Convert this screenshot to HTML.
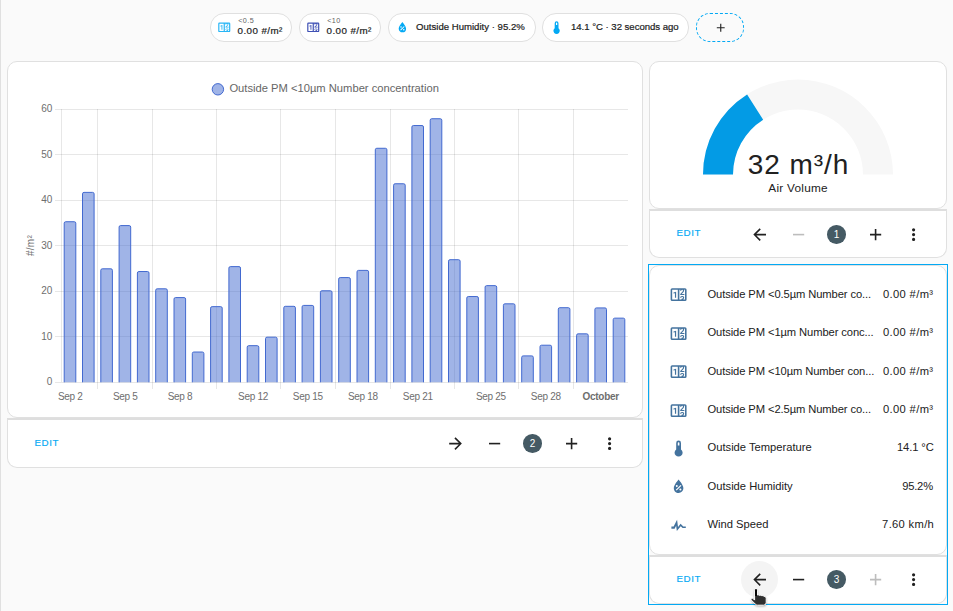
<!DOCTYPE html>
<html><head><meta charset="utf-8">
<style>
html,body{margin:0;padding:0}
body{width:953px;height:611px;overflow:hidden;background:#fafafa;position:relative;font-family:"Liberation Sans",sans-serif;color:#212121}
.abs{position:absolute}
.small{font-size:7.2px;letter-spacing:0.45px;color:#616161;line-height:9px}
.btxt{font-size:9.8px;line-height:12px;white-space:nowrap;-webkit-text-stroke:0.2px #212121}
.ic{position:absolute;display:block}
.badge{position:absolute;top:13px;height:27px;border:1px solid #e0e0e0;border-radius:14px;background:#fff;box-sizing:content-box}
.card{position:absolute;background:#fff;border:1px solid #e0e0e0;border-radius:10px;box-sizing:border-box}
.opts{position:absolute;background:#fff;border:1px solid #e0e0e0;border-top:2px solid #dedede;border-radius:0 0 10px 10px;box-sizing:border-box}
.edit{position:absolute;color:#03a9f4;font-size:9.8px;letter-spacing:0.55px;line-height:12px;-webkit-text-stroke:0.15px #03a9f4}
.num{position:absolute;width:18.6px;height:18.6px;border-radius:50%;background:#455a64;color:#fff;font-size:10px;line-height:20.4px;text-align:center}
.rname{position:absolute;left:707.5px;font-size:11.2px;line-height:14px;white-space:nowrap}
.rn2{letter-spacing:-0.1px}
.rval{position:absolute;right:20px;font-size:11.2px;line-height:14px;white-space:nowrap;text-align:right}
</style></head><body>
<div class="abs" style="left:0;top:0;width:1px;height:611px;background:#e0e0e0"></div>

<!-- badges -->
<div class="badge" style="left:210px;width:80px"></div>
<svg class="ic" style="left:216.8px;top:19.8px;width:14.5px;height:14.5px" viewBox="0 0 24 24"><path fill="#29b6f6" d="M4,4H20A2,2 0 0,1 22,6V18A2,2 0 0,1 20,20H4A2,2 0 0,1 2,18V6A2,2 0 0,1 4,4M4,6V18H11V6H4M20,18V6H18.76C19,6.54 18.95,7.07 18.95,7.13C18.88,7.8 18.41,8.5 18.24,8.75L15.91,11.3L19.23,11.28L19.24,12.5L14.04,12.47L14,11.47C14,11.47 17.05,8.24 17.2,7.95C17.34,7.67 17.91,6 16.5,6C15.27,6.05 15.41,7.3 15.41,7.3L13.87,7.31C13.87,7.31 13.88,6.65 14.25,6H13V18H15.58L15.57,17.14L16.54,17.13C16.54,17.13 17.45,16.97 17.46,16.08C17.5,15.08 16.65,15.08 16.5,15.08C16.37,15.08 15.43,15.13 15.43,15.95H13.91C13.91,15.95 13.95,13.89 16.5,13.89C19.1,13.89 18.96,15.91 18.96,15.91C18.96,15.91 19,17.16 17.85,17.63L18.37,18H20M8.92,16H7.42V10.2L5.62,10.76V9.53L8.76,8.41H8.92V16Z"/></svg>
<div class="abs small" style="left:238.2px;top:16px">&lt;0.5</div>
<div class="abs btxt" style="left:237.6px;top:25px;letter-spacing:0.42px">0.00 #/m²</div>

<div class="badge" style="left:299px;width:80px"></div>
<svg class="ic" style="left:305.8px;top:19.8px;width:14.5px;height:14.5px" viewBox="0 0 24 24"><path fill="#3f51b5" d="M4,4H20A2,2 0 0,1 22,6V18A2,2 0 0,1 20,20H4A2,2 0 0,1 2,18V6A2,2 0 0,1 4,4M4,6V18H11V6H4M20,18V6H18.76C19,6.54 18.95,7.07 18.95,7.13C18.88,7.8 18.41,8.5 18.24,8.75L15.91,11.3L19.23,11.28L19.24,12.5L14.04,12.47L14,11.47C14,11.47 17.05,8.24 17.2,7.95C17.34,7.67 17.91,6 16.5,6C15.27,6.05 15.41,7.3 15.41,7.3L13.87,7.31C13.87,7.31 13.88,6.65 14.25,6H13V18H15.58L15.57,17.14L16.54,17.13C16.54,17.13 17.45,16.97 17.46,16.08C17.5,15.08 16.65,15.08 16.5,15.08C16.37,15.08 15.43,15.13 15.43,15.95H13.91C13.91,15.95 13.95,13.89 16.5,13.89C19.1,13.89 18.96,15.91 18.96,15.91C18.96,15.91 19,17.16 17.85,17.63L18.37,18H20M8.92,16H7.42V10.2L5.62,10.76V9.53L8.76,8.41H8.92V16Z"/></svg>
<div class="abs small" style="left:327.2px;top:16px">&lt;10</div>
<div class="abs btxt" style="left:326.6px;top:25px;letter-spacing:0.42px">0.00 #/m²</div>

<div class="badge" style="left:388px;width:146px"></div>
<svg class="ic" style="left:394.9px;top:20.1px;width:14.8px;height:14.8px" viewBox="0 0 24 24"><path fill="#03a9f4" d="M12,3.25C12,3.25 6,10 6,14C6,17.32 8.69,20 12,20A6,6 0 0,0 18,14C18,10 12,3.25 12,3.25M14.47,9.97L15.53,11.03L9.53,17.03L8.47,15.97M9.75,10A1.25,1.25 0 0,1 11,11.25A1.25,1.25 0 0,1 9.75,12.5A1.25,1.25 0 0,1 8.5,11.25A1.25,1.25 0 0,1 9.75,10M14.25,14.5A1.25,1.25 0 0,1 15.5,15.75A1.25,1.25 0 0,1 14.25,17A1.25,1.25 0 0,1 13,15.75A1.25,1.25 0 0,1 14.25,14.5Z"/></svg>
<div class="abs btxt" style="left:416px;top:20.9px;font-size:9.6px;letter-spacing:0px">Outside Humidity · 95.2%</div>

<div class="badge" style="left:542px;width:145px"></div>
<svg class="ic" style="left:548.7px;top:19.6px;width:15.2px;height:15.2px" viewBox="0 0 24 24"><path fill="#03a9f4" d="M15,13V5A3,3 0 0,0 9,5V13A5,5 0 1,0 15,13M12,4A1,1 0 0,1 13,5V8H11V5A1,1 0 0,1 12,4Z"/></svg>
<div class="abs btxt" style="left:571px;top:20.9px;font-size:9.6px;letter-spacing:-0.03px">14.1 °C · 32 seconds ago</div>

<div class="abs" style="left:696px;top:13px;width:46px;height:27px;border:1px dashed #03a9f4;border-radius:14px"></div>
<svg class="ic" style="left:713.5px;top:21px;width:13.5px;height:13.5px" viewBox="0 0 24 24"><path fill="#212121" d="M19,13H13V19H11V13H5V11H11V5H13V11H19V13Z"/></svg>

<!-- chart card -->
<div class="card" style="left:7px;top:61px;width:636px;height:357px"></div>
<div class="opts" style="left:7px;top:418px;width:636px;height:50px"></div>
<svg class="chart" width="953" height="611" viewBox="0 0 953 611" style="position:absolute;left:0;top:0">
<g stroke="rgba(0,0,0,0.095)" stroke-width="1" shape-rendering="crispEdges"><line x1="54.5" x2="628" y1="382.30" y2="382.30"/><line x1="54.5" x2="628" y1="336.82" y2="336.82"/><line x1="54.5" x2="628" y1="291.34" y2="291.34"/><line x1="54.5" x2="628" y1="245.86" y2="245.86"/><line x1="54.5" x2="628" y1="200.38" y2="200.38"/><line x1="54.5" x2="628" y1="154.90" y2="154.90"/><line x1="54.5" x2="628" y1="109.42" y2="109.42"/><line x1="61.5" x2="61.5" y1="109.4" y2="382.3"/><line x1="97.7" x2="97.7" y1="109.4" y2="388.5"/><line x1="152.6" x2="152.6" y1="109.4" y2="388.5"/><line x1="216.6" x2="216.6" y1="109.4" y2="388.5"/><line x1="280.6" x2="280.6" y1="109.4" y2="388.5"/><line x1="335.4" x2="335.4" y1="109.4" y2="388.5"/><line x1="390.3" x2="390.3" y1="109.4" y2="388.5"/><line x1="454.3" x2="454.3" y1="109.4" y2="388.5"/><line x1="518.3" x2="518.3" y1="109.4" y2="388.5"/><line x1="573.2" x2="573.2" y1="109.4" y2="388.5"/></g>
<g fill="rgba(66,105,208,0.5)" stroke="#4269d0" stroke-width="1"><path d="M64.20,382.30 V223.23 Q64.20,221.73 65.70,221.73 H74.30 Q75.80,221.73 75.80,223.23 V382.30" /><path d="M82.50,382.30 V193.89 Q82.50,192.39 84.00,192.39 H92.60 Q94.10,192.39 94.10,193.89 V382.30" /><path d="M100.80,382.30 V270.30 Q100.80,268.80 102.30,268.80 H110.90 Q112.40,268.80 112.40,270.30 V382.30" /><path d="M119.10,382.30 V227.09 Q119.10,225.59 120.60,225.59 H129.20 Q130.70,225.59 130.70,227.09 V382.30" /><path d="M137.40,382.30 V273.03 Q137.40,271.53 138.90,271.53 H147.50 Q149.00,271.53 149.00,273.03 V382.30" /><path d="M155.70,382.30 V290.31 Q155.70,288.81 157.20,288.81 H165.80 Q167.30,288.81 167.30,290.31 V382.30" /><path d="M174.00,382.30 V299.09 Q174.00,297.59 175.50,297.59 H184.10 Q185.60,297.59 185.60,299.09 V382.30" /><path d="M192.30,382.30 V353.53 Q192.30,352.03 193.80,352.03 H202.40 Q203.90,352.03 203.90,353.53 V382.30" /><path d="M210.60,382.30 V308.14 Q210.60,306.64 212.10,306.64 H220.70 Q222.20,306.64 222.20,308.14 V382.30" /><path d="M228.90,382.30 V268.12 Q228.90,266.62 230.40,266.62 H239.00 Q240.50,266.62 240.50,268.12 V382.30" /><path d="M247.20,382.30 V347.16 Q247.20,345.66 248.70,345.66 H257.30 Q258.80,345.66 258.80,347.16 V382.30" /><path d="M265.50,382.30 V338.66 Q265.50,337.16 267.00,337.16 H275.60 Q277.10,337.16 277.10,338.66 V382.30" /><path d="M283.80,382.30 V307.82 Q283.80,306.32 285.30,306.32 H293.90 Q295.40,306.32 295.40,307.82 V382.30" /><path d="M302.10,382.30 V306.91 Q302.10,305.41 303.60,305.41 H312.20 Q313.70,305.41 313.70,306.91 V382.30" /><path d="M320.40,382.30 V292.27 Q320.40,290.77 321.90,290.77 H330.50 Q332.00,290.77 332.00,292.27 V382.30" /><path d="M338.70,382.30 V279.08 Q338.70,277.58 340.20,277.58 H348.80 Q350.30,277.58 350.30,279.08 V382.30" /><path d="M357.00,382.30 V271.89 Q357.00,270.39 358.50,270.39 H367.10 Q368.60,270.39 368.60,271.89 V382.30" /><path d="M375.30,382.30 V149.78 Q375.30,148.28 376.80,148.28 H385.40 Q386.90,148.28 386.90,149.78 V382.30" /><path d="M393.60,382.30 V185.25 Q393.60,183.75 395.10,183.75 H403.70 Q405.20,183.75 405.20,185.25 V382.30" /><path d="M411.90,382.30 V127.04 Q411.90,125.54 413.40,125.54 H422.00 Q423.50,125.54 423.50,127.04 V382.30" /><path d="M430.20,382.30 V120.22 Q430.20,118.72 431.70,118.72 H440.30 Q441.80,118.72 441.80,120.22 V382.30" /><path d="M448.50,382.30 V261.20 Q448.50,259.70 450.00,259.70 H458.60 Q460.10,259.70 460.10,261.20 V382.30" /><path d="M466.80,382.30 V298.04 Q466.80,296.54 468.30,296.54 H476.90 Q478.40,296.54 478.40,298.04 V382.30" /><path d="M485.10,382.30 V287.13 Q485.10,285.63 486.60,285.63 H495.20 Q496.70,285.63 496.70,287.13 V382.30" /><path d="M503.40,382.30 V305.32 Q503.40,303.82 504.90,303.82 H513.50 Q515.00,303.82 515.00,305.32 V382.30" /><path d="M521.70,382.30 V357.39 Q521.70,355.89 523.20,355.89 H531.80 Q533.30,355.89 533.30,357.39 V382.30" /><path d="M540.00,382.30 V346.71 Q540.00,345.21 541.50,345.21 H550.10 Q551.60,345.21 551.60,346.71 V382.30" /><path d="M558.30,382.30 V309.19 Q558.30,307.69 559.80,307.69 H568.40 Q569.90,307.69 569.90,309.19 V382.30" /><path d="M576.60,382.30 V335.34 Q576.60,333.84 578.10,333.84 H586.70 Q588.20,333.84 588.20,335.34 V382.30" /><path d="M594.90,382.30 V309.41 Q594.90,307.91 596.40,307.91 H605.00 Q606.50,307.91 606.50,309.41 V382.30" /><path d="M613.20,382.30 V319.65 Q613.20,318.15 614.70,318.15 H623.30 Q624.80,318.15 624.80,319.65 V382.30" /></g>
<g font-family="Liberation Sans, sans-serif" font-size="10" fill="#6e6e6e"><text x="52.3" y="385.00" text-anchor="end">0</text><text x="52.3" y="339.52" text-anchor="end">10</text><text x="52.3" y="294.04" text-anchor="end">20</text><text x="52.3" y="248.56" text-anchor="end">30</text><text x="52.3" y="203.08" text-anchor="end">40</text><text x="52.3" y="157.60" text-anchor="end">50</text><text x="52.3" y="112.12" text-anchor="end">60</text></g><g font-family="Liberation Sans, sans-serif" font-size="10" fill="#6e6e6e" letter-spacing="-0.3"><text x="70.3" y="399.8" text-anchor="middle">Sep 2</text><text x="125.2" y="399.8" text-anchor="middle">Sep 5</text><text x="180" y="399.8" text-anchor="middle">Sep 8</text><text x="253" y="399.8" text-anchor="middle">Sep 12</text><text x="307.8" y="399.8" text-anchor="middle">Sep 15</text><text x="362.9" y="399.8" text-anchor="middle">Sep 18</text><text x="417.8" y="399.8" text-anchor="middle">Sep 21</text><text x="490.9" y="399.8" text-anchor="middle">Sep 25</text><text x="545.8" y="399.8" text-anchor="middle">Sep 28</text><text x="600.7" y="399.8" text-anchor="middle" font-weight="bold">October</text></g>
<text transform="translate(34,245.5) rotate(-90)" text-anchor="middle" font-family="Liberation Sans, sans-serif" font-size="10" letter-spacing="0.3" fill="#6e6e6e">#/m²</text>
<circle cx="217.9" cy="89.3" r="5.7" fill="rgba(66,105,208,0.5)" stroke="#4269d0" stroke-width="1"/>
<text x="229.4" y="92.2" font-family="Liberation Sans, sans-serif" font-size="11.2" fill="#666">Outside PM &lt;10µm Number concentration</text>
</svg>
<div class="edit" style="left:34.5px;top:437.3px">EDIT</div>
<svg class="ic" style="left:445.9px;top:433.9px;width:19.2px;height:19.2px" viewBox="0 0 24 24"><path fill="#212121" d="M4,11V13H16L10.5,18.5L11.92,19.92L19.84,12L11.92,4.08L10.5,5.5L16,11H4Z"/></svg><svg class="ic" style="left:484.79999999999995px;top:433.9px;width:19.2px;height:19.2px" viewBox="0 0 24 24"><path fill="#212121" d="M19,13H5V11H19V13Z"/></svg><div class="num" style="left:523.2px;top:434.2px">2</div><svg class="ic" style="left:562.1px;top:433.9px;width:19.2px;height:19.2px" viewBox="0 0 24 24"><path fill="#212121" d="M19,13H13V19H11V13H5V11H11V5H13V11H19V13Z"/></svg><svg class="ic" style="left:599.9px;top:433.9px;width:19.2px;height:19.2px" viewBox="0 0 24 24"><path fill="#212121" d="M12,16A2,2 0 0,1 14,18A2,2 0 0,1 12,20A2,2 0 0,1 10,18A2,2 0 0,1 12,16M12,10A2,2 0 0,1 14,12A2,2 0 0,1 12,14A2,2 0 0,1 10,12A2,2 0 0,1 12,10M12,4A2,2 0 0,1 14,6A2,2 0 0,1 12,8A2,2 0 0,1 10,6A2,2 0 0,1 12,4Z"/></svg>

<!-- gauge card -->
<div class="card" style="left:649px;top:61px;width:298px;height:148px"></div>
<svg width="953" height="611" style="position:absolute;left:0;top:0">
<path d="M703.00,174.60 A95,95 0 0 1 893.00,174.60 L863.00,174.60 A65,65 0 0 0 733.00,174.60 Z" fill="#f7f7f7"/>
<path d="M703.00,174.60 A95,95 0 0 1 747.10,94.39 L763.17,119.72 A65,65 0 0 0 733.00,174.60 Z" fill="#039be5"/>
</svg>
<div class="abs" style="left:700px;width:196px;top:151.3px;text-align:center;font-size:28px;line-height:28px;letter-spacing:0.95px;text-indent:0.9px">32 m³/h</div>
<div class="abs" style="left:700px;width:196px;top:180.5px;text-align:center;font-size:11.8px;line-height:14px;letter-spacing:0.25px;text-indent:0.25px">Air Volume</div>
<div class="opts" style="left:649px;top:209px;width:298px;height:49px"></div>
<div class="edit" style="left:676.5px;top:227.3px">EDIT</div>
<svg class="ic" style="left:749.9px;top:224.9px;width:19.2px;height:19.2px" viewBox="0 0 24 24"><path fill="#212121" d="M20,11V13H8L13.5,18.5L12.08,19.92L4.16,12L12.08,4.08L13.5,5.5L8,11H20Z"/></svg><svg class="ic" style="left:788.8px;top:224.9px;width:19.2px;height:19.2px" viewBox="0 0 24 24"><path fill="#bdbdbd" d="M19,13H5V11H19V13Z"/></svg><div class="num" style="left:827.2px;top:225.2px">1</div><svg class="ic" style="left:866.1px;top:224.9px;width:19.2px;height:19.2px" viewBox="0 0 24 24"><path fill="#212121" d="M19,13H13V19H11V13H5V11H11V5H13V11H19V13Z"/></svg><svg class="ic" style="left:903.9px;top:224.9px;width:19.2px;height:19.2px" viewBox="0 0 24 24"><path fill="#212121" d="M12,16A2,2 0 0,1 14,18A2,2 0 0,1 12,20A2,2 0 0,1 10,18A2,2 0 0,1 12,16M12,10A2,2 0 0,1 14,12A2,2 0 0,1 12,14A2,2 0 0,1 10,12A2,2 0 0,1 12,10M12,4A2,2 0 0,1 14,6A2,2 0 0,1 12,8A2,2 0 0,1 10,6A2,2 0 0,1 12,4Z"/></svg>

<!-- entities card -->
<div class="card" style="left:649px;top:265px;width:298px;height:290px"></div>
<svg class="ic" style="left:669.2px;top:285.29999999999995px;width:19.2px;height:19.2px" viewBox="0 0 24 24"><path fill="#44739e" d="M4,4H20A2,2 0 0,1 22,6V18A2,2 0 0,1 20,20H4A2,2 0 0,1 2,18V6A2,2 0 0,1 4,4M4,6V18H11V6H4M20,18V6H18.76C19,6.54 18.95,7.07 18.95,7.13C18.88,7.8 18.41,8.5 18.24,8.75L15.91,11.3L19.23,11.28L19.24,12.5L14.04,12.47L14,11.47C14,11.47 17.05,8.24 17.2,7.95C17.34,7.67 17.91,6 16.5,6C15.27,6.05 15.41,7.3 15.41,7.3L13.87,7.31C13.87,7.31 13.88,6.65 14.25,6H13V18H15.58L15.57,17.14L16.54,17.13C16.54,17.13 17.45,16.97 17.46,16.08C17.5,15.08 16.65,15.08 16.5,15.08C16.37,15.08 15.43,15.13 15.43,15.95H13.91C13.91,15.95 13.95,13.89 16.5,13.89C19.1,13.89 18.96,15.91 18.96,15.91C18.96,15.91 19,17.16 17.85,17.63L18.37,18H20M8.92,16H7.42V10.2L5.62,10.76V9.53L8.76,8.41H8.92V16Z"/></svg><div class="rname rn2" style="top:286.7px">Outside PM &lt;0.5µm Number co...</div><div class="rval" style="top:286.7px;letter-spacing:0.35px;right:19.6px">0.00 #/m³</div><svg class="ic" style="left:669.2px;top:323.71999999999997px;width:19.2px;height:19.2px" viewBox="0 0 24 24"><path fill="#44739e" d="M4,4H20A2,2 0 0,1 22,6V18A2,2 0 0,1 20,20H4A2,2 0 0,1 2,18V6A2,2 0 0,1 4,4M4,6V18H11V6H4M20,18V6H18.76C19,6.54 18.95,7.07 18.95,7.13C18.88,7.8 18.41,8.5 18.24,8.75L15.91,11.3L19.23,11.28L19.24,12.5L14.04,12.47L14,11.47C14,11.47 17.05,8.24 17.2,7.95C17.34,7.67 17.91,6 16.5,6C15.27,6.05 15.41,7.3 15.41,7.3L13.87,7.31C13.87,7.31 13.88,6.65 14.25,6H13V18H15.58L15.57,17.14L16.54,17.13C16.54,17.13 17.45,16.97 17.46,16.08C17.5,15.08 16.65,15.08 16.5,15.08C16.37,15.08 15.43,15.13 15.43,15.95H13.91C13.91,15.95 13.95,13.89 16.5,13.89C19.1,13.89 18.96,15.91 18.96,15.91C18.96,15.91 19,17.16 17.85,17.63L18.37,18H20M8.92,16H7.42V10.2L5.62,10.76V9.53L8.76,8.41H8.92V16Z"/></svg><div class="rname rn2" style="top:325.12px">Outside PM &lt;1µm Number conc...</div><div class="rval" style="top:325.12px;letter-spacing:0.35px;right:19.6px">0.00 #/m³</div><svg class="ic" style="left:669.2px;top:362.13999999999993px;width:19.2px;height:19.2px" viewBox="0 0 24 24"><path fill="#44739e" d="M4,4H20A2,2 0 0,1 22,6V18A2,2 0 0,1 20,20H4A2,2 0 0,1 2,18V6A2,2 0 0,1 4,4M4,6V18H11V6H4M20,18V6H18.76C19,6.54 18.95,7.07 18.95,7.13C18.88,7.8 18.41,8.5 18.24,8.75L15.91,11.3L19.23,11.28L19.24,12.5L14.04,12.47L14,11.47C14,11.47 17.05,8.24 17.2,7.95C17.34,7.67 17.91,6 16.5,6C15.27,6.05 15.41,7.3 15.41,7.3L13.87,7.31C13.87,7.31 13.88,6.65 14.25,6H13V18H15.58L15.57,17.14L16.54,17.13C16.54,17.13 17.45,16.97 17.46,16.08C17.5,15.08 16.65,15.08 16.5,15.08C16.37,15.08 15.43,15.13 15.43,15.95H13.91C13.91,15.95 13.95,13.89 16.5,13.89C19.1,13.89 18.96,15.91 18.96,15.91C18.96,15.91 19,17.16 17.85,17.63L18.37,18H20M8.92,16H7.42V10.2L5.62,10.76V9.53L8.76,8.41H8.92V16Z"/></svg><div class="rname rn2" style="top:363.53999999999996px">Outside PM &lt;10µm Number con...</div><div class="rval" style="top:363.53999999999996px;letter-spacing:0.35px;right:19.6px">0.00 #/m³</div><svg class="ic" style="left:669.2px;top:400.55999999999995px;width:19.2px;height:19.2px" viewBox="0 0 24 24"><path fill="#44739e" d="M4,4H20A2,2 0 0,1 22,6V18A2,2 0 0,1 20,20H4A2,2 0 0,1 2,18V6A2,2 0 0,1 4,4M4,6V18H11V6H4M20,18V6H18.76C19,6.54 18.95,7.07 18.95,7.13C18.88,7.8 18.41,8.5 18.24,8.75L15.91,11.3L19.23,11.28L19.24,12.5L14.04,12.47L14,11.47C14,11.47 17.05,8.24 17.2,7.95C17.34,7.67 17.91,6 16.5,6C15.27,6.05 15.41,7.3 15.41,7.3L13.87,7.31C13.87,7.31 13.88,6.65 14.25,6H13V18H15.58L15.57,17.14L16.54,17.13C16.54,17.13 17.45,16.97 17.46,16.08C17.5,15.08 16.65,15.08 16.5,15.08C16.37,15.08 15.43,15.13 15.43,15.95H13.91C13.91,15.95 13.95,13.89 16.5,13.89C19.1,13.89 18.96,15.91 18.96,15.91C18.96,15.91 19,17.16 17.85,17.63L18.37,18H20M8.92,16H7.42V10.2L5.62,10.76V9.53L8.76,8.41H8.92V16Z"/></svg><div class="rname rn2" style="top:401.96px">Outside PM &lt;2.5µm Number co...</div><div class="rval" style="top:401.96px;letter-spacing:0.35px;right:19.6px">0.00 #/m³</div><svg class="ic" style="left:669.2px;top:438.97999999999996px;width:19.2px;height:19.2px" viewBox="0 0 24 24"><path fill="#44739e" d="M15,13V5A3,3 0 0,0 9,5V13A5,5 0 1,0 15,13M12,4A1,1 0 0,1 13,5V8H11V5A1,1 0 0,1 12,4Z"/></svg><div class="rname" style="top:440.38px">Outside Temperature</div><div class="rval" style="top:440.38px;letter-spacing:-0.1px;right:19.3px">14.1 °C</div><svg class="ic" style="left:669.2px;top:477.4px;width:19.2px;height:19.2px" viewBox="0 0 24 24"><path fill="#44739e" d="M12,3.25C12,3.25 6,10 6,14C6,17.32 8.69,20 12,20A6,6 0 0,0 18,14C18,10 12,3.25 12,3.25M14.47,9.97L15.53,11.03L9.53,17.03L8.47,15.97M9.75,10A1.25,1.25 0 0,1 11,11.25A1.25,1.25 0 0,1 9.75,12.5A1.25,1.25 0 0,1 8.5,11.25A1.25,1.25 0 0,1 9.75,10M14.25,14.5A1.25,1.25 0 0,1 15.5,15.75A1.25,1.25 0 0,1 14.25,17A1.25,1.25 0 0,1 13,15.75A1.25,1.25 0 0,1 14.25,14.5Z"/></svg><div class="rname" style="top:478.8px">Outside Humidity</div><div class="rval" style="top:478.8px;letter-spacing:-0.2px;right:20.1px">95.2%</div><svg class="ic" style="left:669.2px;top:515.82px;width:19.2px;height:19.2px" viewBox="0 0 24 24"><path fill="#44739e" d="M3,13H5.79L10.1,4.79L11.28,13.75L14.5,9.66L17.83,13H21V15H17L14.67,12.67L9.8,18.9L8.94,12.31L7,16H3V13Z"/></svg><div class="rname" style="top:517.22px">Wind Speed</div><div class="rval" style="top:517.22px;letter-spacing:0.32px;right:18.9px">7.60 km/h</div>
<div class="opts" style="left:649px;top:555px;width:298px;height:49px"></div>
<div class="edit" style="left:676.5px;top:573.3px">EDIT</div>
<div style="position:absolute;left:741.0px;top:561.0px;width:37px;height:37px;border-radius:50%;background:#f4f4f4"></div><svg class="ic" style="left:749.9px;top:569.9px;width:19.2px;height:19.2px" viewBox="0 0 24 24"><path fill="#212121" d="M20,11V13H8L13.5,18.5L12.08,19.92L4.16,12L12.08,4.08L13.5,5.5L8,11H20Z"/></svg><svg class="ic" style="left:788.8px;top:569.9px;width:19.2px;height:19.2px" viewBox="0 0 24 24"><path fill="#212121" d="M19,13H5V11H19V13Z"/></svg><div class="num" style="left:827.2px;top:570.2px">3</div><svg class="ic" style="left:866.1px;top:569.9px;width:19.2px;height:19.2px" viewBox="0 0 24 24"><path fill="#bdbdbd" d="M19,13H13V19H11V13H5V11H11V5H13V11H19V13Z"/></svg><svg class="ic" style="left:903.9px;top:569.9px;width:19.2px;height:19.2px" viewBox="0 0 24 24"><path fill="#212121" d="M12,16A2,2 0 0,1 14,18A2,2 0 0,1 12,20A2,2 0 0,1 10,18A2,2 0 0,1 12,16M12,10A2,2 0 0,1 14,12A2,2 0 0,1 12,14A2,2 0 0,1 10,12A2,2 0 0,1 12,10M12,4A2,2 0 0,1 14,6A2,2 0 0,1 12,8A2,2 0 0,1 10,6A2,2 0 0,1 12,4Z"/></svg>
<div class="abs" style="left:648px;top:264px;width:298px;height:339px;border:1.6px solid #03a9f4"></div>
<svg style="position:absolute;left:0;top:0" width="953" height="611"><defs><filter id="sh" x="-50%" y="-50%" width="200%" height="200%"><feGaussianBlur stdDeviation="0.8"/></filter></defs>
<path d="M754.6,590.2 Q754.6,588.4 756,588.4 Q757.4,588.4 757.4,590.2 L757.4,595 Q758.6,594.6 759.6,595.4 Q760.8,594.8 761.8,595.7 Q763,595.2 764,596.2 Q766.2,596.2 766.2,598.2 L766.2,602.4 Q766.2,605.2 763.6,605.2 L757.6,605.2 Q756.4,605.2 755.4,604.2 L751.3,600.1 Q750.6,599.2 751.5,598.5 Q752.4,597.9 753.3,598.8 L754.6,600.1 Z" fill="#000" opacity="0.35" filter="url(#sh)" transform="translate(0,1)"/>
<path d="M754.6,590.2 Q754.6,588.4 756,588.4 Q757.4,588.4 757.4,590.2 L757.4,595 Q758.6,594.6 759.6,595.4 Q760.8,594.8 761.8,595.7 Q763,595.2 764,596.2 Q766.2,596.2 766.2,598.2 L766.2,602.4 Q766.2,605.2 763.6,605.2 L757.6,605.2 Q756.4,605.2 755.4,604.2 L751.3,600.1 Q750.6,599.2 751.5,598.5 Q752.4,597.9 753.3,598.8 L754.6,600.1 Z" fill="#2e2e2e" stroke="#fff" stroke-width="1"/>
<path d="M755.1,589.5 L756.9,589.5 L756.9,596 L755.1,596 Z" fill="#000"/>
</svg>
</body></html>
